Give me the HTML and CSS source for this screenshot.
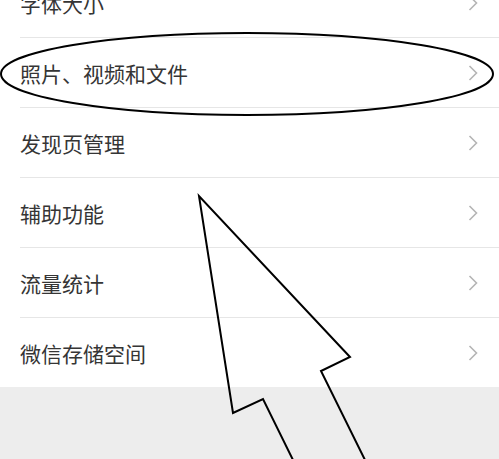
FILE: index.html
```html
<!DOCTYPE html>
<html lang="zh-CN">
<head>
<meta charset="utf-8">
<link rel="stylesheet" href="styles.css">
</head>
<body>
<div class="page">
  <ul class="list">
    <li class="item"><span class="label">字体大小</span><svg class="chev" viewBox="0 0 10 16"><path d="M1.5 1 L8.5 8 L1.5 15"/></svg></li>
    <li class="item"><span class="label">照片、视频和文件</span><svg class="chev" viewBox="0 0 10 16"><path d="M1.5 1 L8.5 8 L1.5 15"/></svg></li>
    <li class="item"><span class="label">发现页管理</span><svg class="chev" viewBox="0 0 10 16"><path d="M1.5 1 L8.5 8 L1.5 15"/></svg></li>
    <li class="item"><span class="label">辅助功能</span><svg class="chev" viewBox="0 0 10 16"><path d="M1.5 1 L8.5 8 L1.5 15"/></svg></li>
    <li class="item"><span class="label">流量统计</span><svg class="chev" viewBox="0 0 10 16"><path d="M1.5 1 L8.5 8 L1.5 15"/></svg></li>
    <li class="item last"><span class="label">微信存储空间</span><svg class="chev" viewBox="0 0 10 16"><path d="M1.5 1 L8.5 8 L1.5 15"/></svg></li>
  </ul>
  <div class="footer"></div>
  <svg class="overlay" viewBox="0 0 499 459" width="499" height="459">
    <ellipse cx="247" cy="74" rx="246" ry="41" fill="none" stroke="#000" stroke-width="2"/>
    <polyline points="294,462 263,399 233,413 199,196 350,357 321,371 366,462" fill="none" stroke="#000" stroke-width="2" stroke-linejoin="miter"/>
  </svg>
</div>
</body>
</html>
```
FILE: styles.css
```css
html, body {
  margin: 0;
  padding: 0;
  background: #ededed;
}
.page {
  position: relative;
  width: 499px;
  height: 459px;
  overflow: hidden;
  background: #ededed;
  font-family: "Noto Sans CJK SC", "Noto Sans", sans-serif;
}
.list {
  list-style: none;
  margin: -32px 0 0 0;
  padding: 0 0 0 20px;
  background: #fff;
}
.item {
  display: flex;
  align-items: center;
  justify-content: space-between;
  height: 69px;
  border-bottom: 1px solid #e6e6e6;
  padding-right: 21px;
}
.item.last {
  border-bottom: none;
}
.label {
  font-size: 21px;
  color: #353535;
  line-height: 1;
  padding-top: 2px;
}
.chev {
  width: 10px;
  height: 16px;
}
.chev path {
  fill: none;
  stroke: #b5b5b5;
  stroke-width: 1.6;
}
.footer {
  height: 100px;
  background: #ededed;
}
.overlay {
  position: absolute;
  left: 0;
  top: 0;
}
```
